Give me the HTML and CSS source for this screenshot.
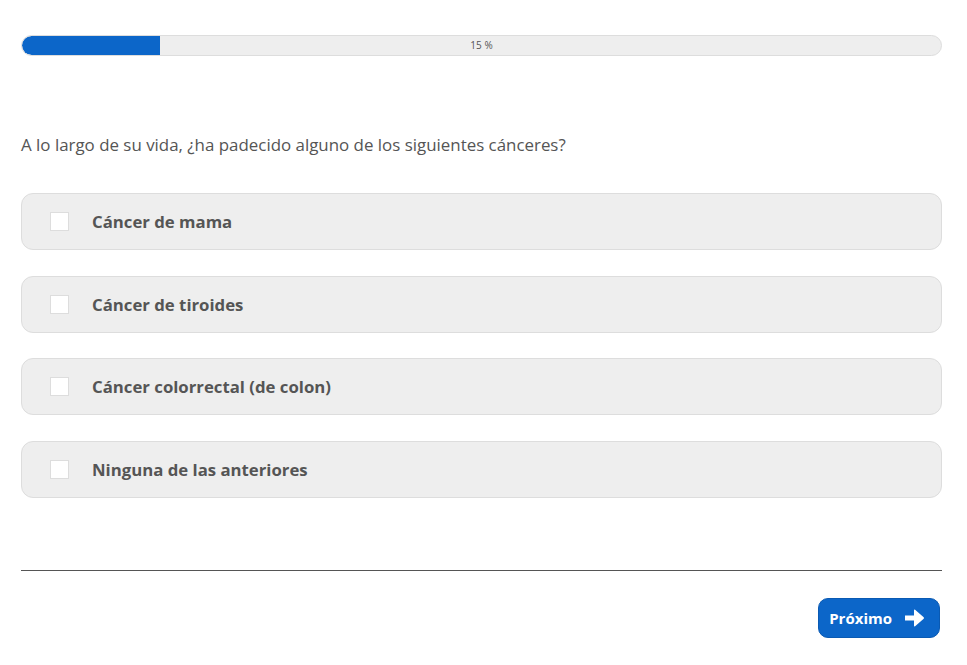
FILE: index.html
```html
<!DOCTYPE html>
<html lang="es">
<head>
    <meta charset="UTF-8">
    <meta name="viewport" content="width=device-width, initial-scale=1.0">
    <title>Cuestionario</title>
    <link rel="stylesheet" href="styles.css">
</head>
<body>
    <div class="container">
        <div class="progress">
            <div class="progress-fill" style="width: 15%"></div>
            <span class="progress-label">15 %</span>
        </div>

        <p class="question">A lo largo de su vida, ¿ha padecido alguno de los siguientes cánceres?</p>

        <div class="options">
            <label class="option">
                <span class="check"></span>
                <span class="option-text">Cáncer de mama</span>
            </label>
            <label class="option">
                <span class="check"></span>
                <span class="option-text">Cáncer de tiroides</span>
            </label>
            <label class="option">
                <span class="check"></span>
                <span class="option-text">Cáncer colorrectal (de colon)</span>
            </label>
            <label class="option">
                <span class="check"></span>
                <span class="option-text">Ninguna de las anteriores</span>
            </label>
        </div>

        <hr class="divider">

        <div class="actions">
            <button class="next-btn">
                Próximo
                <svg class="arrow" viewBox="0 0 20 18" width="20" height="18">
                    <path d="M0 6.5h9V1.2c0-.6.7-.9 1.1-.5l8.6 7.6c.4.4.4 1 0 1.4l-8.6 7.6c-.4.4-1.1.1-1.1-.5V11.5H0z" fill="#fff"/>
                </svg>
            </button>
        </div>
    </div>
</body>
</html>
```

FILE: styles.css
```css
body {
    margin: 0;
    font-family: "Open Sans", "Liberation Sans", sans-serif;
    color: #555;
    background: #fff;
}

.container {
    padding: 35px 25px 0 21px;
}

.progress {
    position: relative;
    height: 19px;
    background: #eee;
    border: 1px solid #ddd;
    border-radius: 11px;
    overflow: hidden;
}

.progress-fill {
    height: 100%;
    background: #0c66c9;
    border-radius: 11px 0 0 11px;
}

.progress-label {
    position: absolute;
    top: 0;
    left: 0;
    right: 0;
    line-height: 19px;
    text-align: center;
    font-size: 10px;
    color: #555;
}

.question {
    margin: 77px 0 36px;
    font-size: 16.9px;
    line-height: 24px;
}

.options {
    display: flex;
    flex-direction: column;
    gap: 25.7px;
}

.option {
    display: flex;
    align-items: center;
    gap: 23px;
    height: 55px;
    padding: 0 28px;
    background: #eee;
    border: 1px solid #ddd;
    border-radius: 12px;
    cursor: pointer;
}

.check {
    width: 17px;
    height: 17px;
    background: #fff;
    border: 1px solid #ddd;
}

.option-text {
    font-size: 16.75px;
    font-weight: 700;
    color: #555;
}

.divider {
    margin: 72px 0 0;
    border: 0;
    border-top: 1px solid #555;
}

.actions {
    display: flex;
    justify-content: flex-end;
    padding: 27px 2px 0 0;
}

.next-btn {
    display: flex;
    align-items: center;
    gap: 13px;
    height: 40px;
    padding: 0 14px 0 10px;
    background: #0c66c9;
    color: #fff;
    border: 1px solid #0a5ab3;
    border-radius: 10px;
    font-family: "Open Sans", "Liberation Sans", sans-serif;
    font-size: 15px;
    font-weight: 700;
    cursor: pointer;
}
```
